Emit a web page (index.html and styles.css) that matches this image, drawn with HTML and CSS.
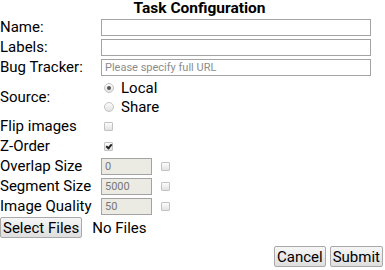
FILE: index.html
```html
<!DOCTYPE html>
<html lang="en">
<head>
    <meta charset="UTF-8">
    <title>Task Configuration</title>
    <link rel="stylesheet" href="styles.css">
</head>
<body>
    <div class="task-config">
        <h2>Task Configuration</h2>

        <div class="row">
            <label class="key">Name:</label>
            <input type="text" class="wide">
        </div>
        <div class="row">
            <label class="key">Labels:</label>
            <input type="text" class="wide">
        </div>
        <div class="row">
            <label class="key">Bug Tracker:</label>
            <input type="text" class="wide" placeholder="Please specify full URL">
        </div>

        <div class="row source">
            <label class="key">Source:</label>
            <div class="radios">
                <label class="radio"><input type="radio" name="source" checked> Local</label>
                <label class="radio"><input type="radio" name="source"> Share</label>
            </div>
        </div>

        <div class="row check-row">
            <label class="key">Flip images</label>
            <input type="checkbox" class="box">
        </div>
        <div class="row check-row">
            <label class="key">Z-Order</label>
            <input type="checkbox" class="box" checked>
        </div>

        <div class="row num-row">
            <label class="key">Overlap Size</label>
            <input type="text" class="num" value="0" disabled>
            <input type="checkbox" class="box">
        </div>
        <div class="row num-row">
            <label class="key">Segment Size</label>
            <input type="text" class="num" value="5000" disabled>
            <input type="checkbox" class="box">
        </div>
        <div class="row num-row">
            <label class="key">Image Quality</label>
            <input type="text" class="num" value="50" disabled>
            <input type="checkbox" class="box">
        </div>

        <div class="files">
            <button class="btn">Select Files</button>
            <span class="file-label">No Files</span>
        </div>

        <div class="actions">
            <button class="btn">Cancel</button>
            <button class="btn">Submit</button>
        </div>
    </div>
</body>
</html>
```

FILE: styles.css
```css
body {
    margin: 0;
    background-color: white;
    font-family: "Liberation Sans Narrow", "Roboto", sans-serif;
    font-size: 15px;
    color: black;
}
.task-config {
    width: 385px;
}
h2 {
    margin: 0;
    padding-left: 14px;
    height: 17px;
    line-height: 16px;
    text-align: center;
    font-family: "Roboto", sans-serif;
    font-size: 15.5px;
    font-weight: bold;
}
.row {
    display: flex;
    align-items: center;
    height: 20px;
}
.key {
    width: 101px;
    flex-shrink: 0;
}
input[type="text"] {
    box-sizing: border-box;
    height: 17px;
    margin: 0;
    padding: 0 3px;
    border: 1px solid #a3a3a3;
    font-family: "Liberation Sans Narrow", "Roboto", sans-serif;
    font-size: 11px;
    color: #777;
}
input::placeholder {
    color: #8c8c8c;
}
.wide {
    width: 270px;
}
.num {
    width: 51px;
    background-color: #ebebe4;
}
/* grey old-style checkboxes and radios */
input[type="checkbox"],
input[type="radio"] {
    -webkit-appearance: none;
    appearance: none;
    box-sizing: border-box;
    position: relative;
    border: 1px solid #c3c3c3;
    background: linear-gradient(#fcfcfc, #e2e2e2);
}
.box {
    width: 9px;
    height: 9px;
    margin: 0 0 0 3px;
    border-radius: 1px;
}
.box:checked::after {
    content: "";
    position: absolute;
    left: 2px;
    top: 0;
    width: 2px;
    height: 4px;
    border: solid #222;
    border-width: 0 2px 2px 0;
    transform: rotate(40deg);
}
.num-row .box {
    margin-left: 9px;
}
.source {
    height: 38px;
    margin-top: 1px;
}
.radios {
    display: flex;
    flex-direction: column;
}
.radio {
    display: flex;
    align-items: center;
    height: 19px;
}
.radio input {
    width: 10px;
    height: 10px;
    margin: 0 7px 0 3px;
    border-radius: 50%;
}
.radio input:checked::after {
    content: "";
    position: absolute;
    left: 2px;
    top: 2px;
    width: 4px;
    height: 4px;
    border-radius: 50%;
    background-color: #555;
}
.btn {
    height: 21px;
    padding: 0 2px;
    border: 1px solid #a9a9a9;
    border-radius: 2px;
    background: linear-gradient(#f6f6f6, #dedede);
    font-family: "Liberation Sans Narrow", "Roboto", sans-serif;
    font-size: 15px;
    color: black;
}
.files {
    display: flex;
    align-items: center;
    margin-top: 1px;
}
.file-label {
    margin-left: 10px;
}
.actions {
    display: flex;
    justify-content: flex-end;
    gap: 4px;
    margin-top: 8px;
    padding-right: 2px;
}
```
